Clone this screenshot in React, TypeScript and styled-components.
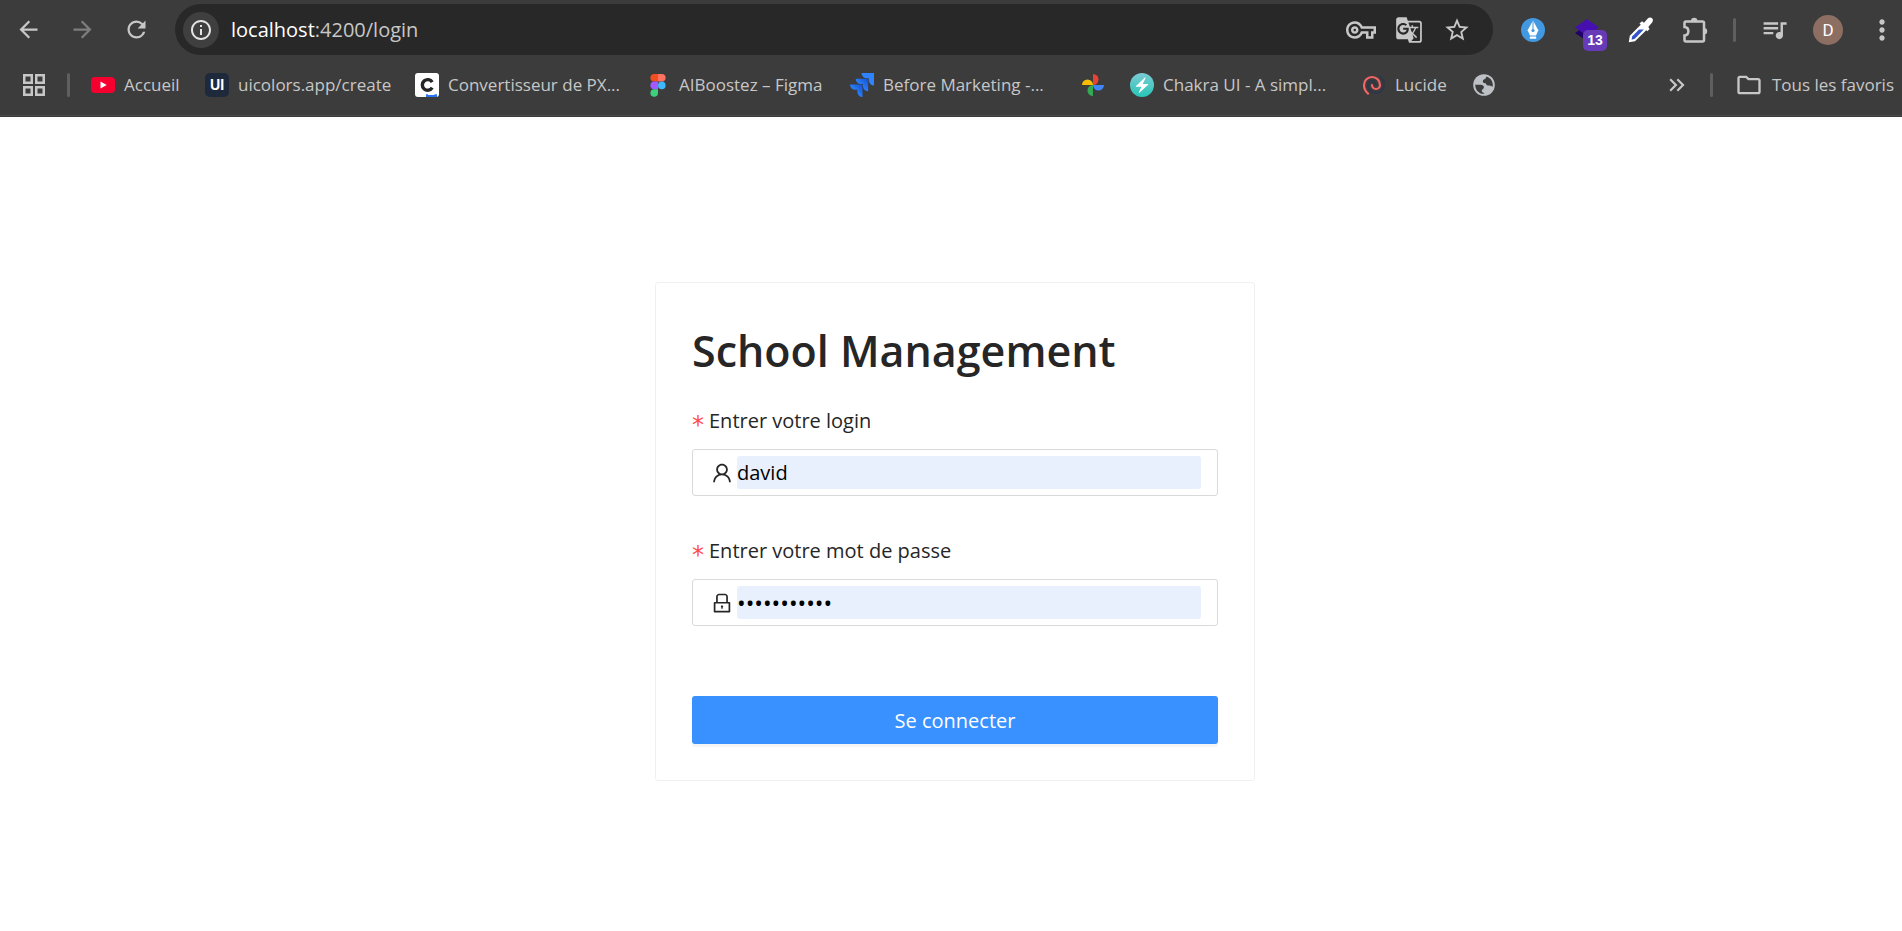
import React from 'react';
import styled, { createGlobalStyle } from 'styled-components';
import {
  MdArrowBack,
  MdArrowForward,
  MdRefresh,
  MdInfoOutline,
  MdGTranslate,
  MdOutlineVpnKey,
  MdStarBorder,
  MdQueueMusic,
  MdMoreVert,
  MdOutlineFolder,
  MdKeyboardDoubleArrowRight,
} from 'react-icons/md';
import { AiOutlineUser, AiOutlineLock } from 'react-icons/ai';

const GlobalStyle = createGlobalStyle`
  *, *::before, *::after { box-sizing: border-box; }
  body {
    margin: 0;
    background: #fff;
    font-family: "Segoe UI", "Open Sans", "Noto Sans", sans-serif;
  }
  svg { display: block; flex: none; }
`;

const Page = styled.div`
  min-height: 100vh;
  display: flex;
  flex-direction: column;
`;

const BrowserBar = styled.header`
  background: #3c3c3c;
  color: #c7c7c7;
  padding: 4px 0 1px;
`;

const Toolbar = styled.div`
  display: flex;
  align-items: center;
  height: 51px;
`;

const NavButtons = styled.nav`
  display: flex;
  gap: 8px;
  padding: 0 16px 0 5px;
`;

const IconButton = styled.button<{ $width?: number; $dim?: boolean }>`
  position: relative;
  display: flex;
  align-items: center;
  justify-content: center;
  flex: none;
  width: ${(p) => p.$width ?? 40}px;
  height: 40px;
  padding: 0;
  border: 0;
  background: none;
  color: ${(p) => (p.$dim ? '#7d7d7d' : '#c7c7c7')};
`;

const AddressBar = styled.div`
  display: flex;
  align-items: center;
  flex: 1;
  min-width: 0;
  height: 51px;
  padding: 0 16px 0 8px;
  border-radius: 26px;
  background: #282828;
`;

const SiteInfo = styled.button`
  display: flex;
  align-items: center;
  justify-content: center;
  flex: none;
  width: 36px;
  height: 36px;
  margin-right: 12px;
  padding: 0;
  border: 0;
  border-radius: 50%;
  background: #3f3f3f;
  color: #e3e3e3;
`;

const Url = styled.div`
  flex: 1;
  min-width: 0;
  overflow: hidden;
  white-space: nowrap;
  font-size: 20px;
  line-height: 28px;
  color: #c7c7c7;
`;

const Host = styled.span`
  color: #fff;
`;

const AddressActions = styled.div`
  display: flex;
  gap: 8px;
`;

const Extensions = styled.div`
  display: flex;
  align-items: center;
  gap: 14px;
  padding-left: 20px;
`;

const Divider = styled.span<{ $space?: number }>`
  flex: none;
  width: 3px;
  height: 24px;
  margin: 0 ${(p) => p.$space ?? 0}px;
  border-radius: 2px;
  background: #5f5f5f;
`;

const Badge = styled.span`
  position: absolute;
  right: 0;
  bottom: -1px;
  width: 24px;
  height: 21px;
  border-radius: 5px;
  background: #673ab7;
  color: #fff;
  font-size: 14px;
  font-weight: 700;
  line-height: 21px;
  text-align: center;
`;

const Avatar = styled.span`
  width: 30px;
  height: 30px;
  border-radius: 50%;
  background: #8d6e63;
  color: #fff;
  font-family: Roboto, sans-serif;
  font-size: 17px;
  line-height: 30px;
  text-align: center;
`;

const BookmarksBar = styled.div`
  display: flex;
  align-items: center;
  height: 61px;
  padding: 0 8px 0 22px;
  border-bottom: 1px solid #484848;
`;

const BookmarkList = styled.nav`
  display: flex;
  align-items: center;
  gap: 25px;
  flex: 1;
  min-width: 0;
  overflow: hidden;
`;

const Bookmark = styled.a`
  display: flex;
  align-items: center;
  flex: none;
  gap: 9px;
  color: #c7c7c7;
  text-decoration: none;
`;

const BookmarkLabel = styled.span<{ $width?: number }>`
  width: ${(p) => (p.$width ? `${p.$width}px` : 'auto')};
  font-size: 17px;
  line-height: 24px;
  white-space: nowrap;
`;

const BookmarkTools = styled.div`
  display: flex;
  align-items: center;
  gap: 10px;
`;

const FolderLink = styled(Bookmark)`
  padding-left: 12px;
`;

const Tile = styled.span<{ $bg: string; $color: string }>`
  width: 24px;
  height: 24px;
  border-radius: 5px;
  background: ${(p) => p.$bg};
  color: ${(p) => p.$color};
  font-family: Inter, sans-serif;
  font-size: 14px;
  font-weight: 700;
  line-height: 24px;
  text-align: center;
`;

const Main = styled.main`
  display: flex;
  flex: 1;
  align-items: flex-start;
  justify-content: center;
  padding: 165px 0 40px 8px;
`;

const Card = styled.form`
  width: 600px;
  max-width: 100%;
  padding: 36px;
  border: 1px solid #f0f0f0;
  border-radius: 3px;
`;

const Title = styled.h1`
  margin: 0 0 22px;
  color: #262626;
  font-size: 43px;
  font-weight: 600;
  line-height: 64px;
`;

const Field = styled.div`
  margin-bottom: 39px;
`;

const FieldLabel = styled.label`
  display: flex;
  gap: 5px;
  height: 32px;
  margin-bottom: 12px;
  color: #262626;
  font-size: 20px;
  line-height: 32px;
`;

const Required = styled.span`
  color: #ff4d4f;
  font-family: "DejaVu Sans", sans-serif;
  font-size: 24px;
  line-height: 40px;
`;

const InputBox = styled.div`
  display: flex;
  align-items: center;
  gap: 3px;
  height: 47px;
  padding: 0 16px 0 17px;
  border: 1px solid #d9d9d9;
  border-radius: 3px;
  color: #262626;
`;

const TextInput = styled.input`
  flex: 1;
  min-width: 0;
  height: 33px;
  padding: 0;
  border: 0;
  border-radius: 3px;
  outline: 0;
  background: #e8f0fe;
  color: #000;
  font-family: inherit;
  font-size: 20px;

  &[type='password'] {
    font-size: 23px;
  }
`;

const SubmitButton = styled.button`
  display: block;
  width: 100%;
  height: 48px;
  margin-top: 70px;
  padding: 0;
  border: 0;
  border-radius: 3px;
  background: #3891ff;
  box-shadow: 0 3px 0 rgba(0, 0, 0, 0.04);
  color: #fff;
  font-family: inherit;
  font-size: 20px;
`;

const AppsIcon = () => (
  <svg width="24" height="24" viewBox="0 0 24 24" fill="none" stroke="#c7c7c7" strokeWidth="2.5">
    <path d="M2.25 2.25h7.5v7.5h-7.5zM14.25 2.25h7.5v7.5h-7.5zM2.25 14.25h7.5v7.5h-7.5zM14.25 14.25h7.5v7.5h-7.5z" />
  </svg>
);

const YoutubeIcon = () => (
  <svg width="24" height="24" viewBox="0 0 24 24">
    <rect y="4" width="24" height="16" rx="4" fill="#f5002f" />
    <path d="M9.5 8.5v7l6.200-3.500z" fill="#fff" />
  </svg>
);

const ConverterIcon = () => (
  <svg width="24" height="24" viewBox="0 0 24 24">
    <rect width="24" height="24" rx="3" fill="#fff" />
    <path d="M17.200 9.200A5.300 5.300 0 1 0 17.200 14.600" fill="none" stroke="#262626" strokeWidth="3.400" />
    <path d="M11 21.300h2v.7h6.500v-.7H22V24H11z" fill="#2b74f5" />
  </svg>
);

const FigmaIcon = () => (
  <svg width="24" height="24" viewBox="0 0 24 24">
    <path d="M8.200 1H12v7.600H8.200a3.800 3.800 0 0 1 0-7.600z" fill="#f24e1e" />
    <path d="M12 1h3.800a3.800 3.800 0 0 1 0 7.600H12z" fill="#ff7262" />
    <path d="M8.200 8.600H12v7.600H8.200a3.800 3.800 0 0 1 0-7.600z" fill="#a259ff" />
    <circle cx="15.800" cy="12.400" r="3.800" fill="#3fb8ff" />
    <path d="M8.200 16.200H12V20a3.800 3.800 0 1 1-3.800-3.800z" fill="#3ecf7c" />
  </svg>
);

const JiraIcon = () => (
  <svg width="24" height="24" viewBox="0 0 24 24">
    <defs>
      <linearGradient id="jira" x1="1" y1="0" x2="0.300" y2="0.700">
        <stop offset="0.150" stopColor="#1558d6" />
        <stop offset="0.900" stopColor="#2f83ff" />
      </linearGradient>
    </defs>
    <path d="M11.500 0H24v12.500a5.200 5.200 0 0 1-5.200-5.200V5.200h-2.100A5.200 5.200 0 0 1 11.500 0z" fill="#2f83ff" />
    <path d="M5.700 5.800h12.500v12.500a5.200 5.200 0 0 1-5.200-5.200V11h-2.100a5.200 5.200 0 0 1-5.200-5.200z" fill="url(#jira)" />
    <path d="M0 11.500h12.500V24a5.200 5.200 0 0 1-5.200-5.200v-2.100H5.200A5.200 5.200 0 0 1 0 11.500z" fill="url(#jira)" />
  </svg>
);

const PhotosIcon = () => (
  <svg width="24" height="24" viewBox="0 0 24 24">
    <path d="M12 1a5.500 5.500 0 0 1 0 11z" fill="#ea4335" />
    <path d="M12 12H1a5.500 5.500 0 0 1 11 0z" fill="#fbbc04" />
    <path d="M12 12h11a5.500 5.500 0 0 1-11 0z" fill="#4285f4" />
    <path d="M12 23a5.500 5.500 0 0 1 0-11z" fill="#34a853" />
  </svg>
);

const ChakraIcon = () => (
  <svg width="24" height="24" viewBox="0 0 24 24">
    <defs>
      <linearGradient id="chakra" x1="0" y1="0" x2="0" y2="1">
        <stop stopColor="#7bcbd4" />
        <stop offset="1" stopColor="#29c6b7" />
      </linearGradient>
    </defs>
    <circle cx="12" cy="12" r="12" fill="url(#chakra)" />
    <path d="M14.900 4.600 6 12.900c-.4.400-.1.900.3.900h5.200l-2.700 5.400c-.2.500.2.900.6.500l8.700-7.900c.4-.4.100-.9-.3-.9h-5.100l2.800-5.700c.2-.5-.2-.9-.6-.6z" fill="#fff" />
  </svg>
);

const LucideLogo = () => (
  <svg width="24" height="24" viewBox="0 0 24 24" fill="none" strokeWidth="2.200" strokeLinecap="round">
    <path d="M14 12a4 4 0 0 0-8 0 8 8 0 1 0 16 0 11 11 0 0 0-4.100-8.600" stroke="#2d3748" />
    <path d="M10 12a4 4 0 0 0 8 0 8 8 0 1 0-16 0 11 11 0 0 0 4.100 8.600" stroke="#f56565" />
  </svg>
);

const GlobeIcon = () => (
  <svg width="24" height="24" viewBox="0 0 24 24">
    <circle cx="12" cy="12" r="10.800" fill="#bdc1c6" />
    <path
      d="M14.500 3.500c3.500 1 6.300 4.200 6.300 8.500 0 .8 0 1.200-.2 1.800-1.200-.8-2.800-1.300-4.300-1.300-1.800 0-2.300-1-2.300-2.200-1.800 0-3.200-.3-3.200-2 0-1.200 1-1.700 2-2.200 1.200-.6 1.200-1.600 1.700-2.600z"
      fill="#3c3c3c"
    />
    <path
      d="M3.200 11.500c1.500.3 3 .3 5.500.3 2 0 3.200 1 3.200 2.500 0 1-.5 1.500-1.200 1.900-.8.500-1 1.300-1 2.300l3 2.200c-5 .8-9.500-3-9.500-9.200z"
      fill="#3c3c3c"
    />
  </svg>
);

const PenIcon = () => (
  <svg width="24" height="24" viewBox="0 0 24 24">
    <circle cx="12" cy="12" r="12" fill="#4299e1" />
    <path d="M12 2.500 6.700 12.300 9 17.500h6l2.300-5.200z" fill="#fff" />
    <rect x="8.800" y="18.400" width="6.400" height="2.400" rx=".6" fill="#fff" />
    <path d="M12 3v9" stroke="#4299e1" strokeWidth="1" />
    <circle cx="12" cy="12.500" r="1.600" fill="#4299e1" />
  </svg>
);

const LayersIcon = () => (
  <svg width="26" height="24" viewBox="0 0 26 24">
    <path d="M1 15 13 7l12 8-12 8z" fill="#1f0066" />
    <path d="M1 9.500 13 1l12 8.500L13 18z" fill="#4610b0" />
  </svg>
);

const DropperIcon = () => (
  <svg width="26" height="26" viewBox="0 0 26 26">
    <path d="M14 6.500 1.800 18.800.8 25.200l6.200-1L19.500 12z" fill="#fff" />
    <path d="M11 12.500h4.800L6.800 21.800l-3.200.9.500-3.200z" fill="#3154c8" />
    <path d="m11.500 6.500 2.500-2.300 2 1.500L20 1.300c1.200-1.200 3-1.200 4.100 0s1.200 2.900 0 4.100L20.300 10l1.300 2-2.300 2.300z" fill="#fff" />
  </svg>
);

const PuzzleIcon = () => (
  <svg width="26" height="26" viewBox="0 0 26 26">
    <path
      d="M4 4.500h16.500a1.500 1.500 0 0 1 1.500 1.500v17a1.500 1.500 0 0 1-1.500 1.500H4A1.500 1.500 0 0 1 2.500 23v-4.500c5.200-.5 5.200-8 0-8.500V6A1.500 1.500 0 0 1 4 4.500z"
      fill="none"
      stroke="#c7c7c7"
      strokeWidth="2.500"
    />
    <path d="M9 4a3.200 3.200 0 0 1 6.400 0zM22 11a3.200 3.200 0 0 1 0 6.400z" fill="#c7c7c7" />
  </svg>
);

interface BookmarkItem {
  icon: React.ReactNode;
  label?: string;
  width?: number;
  name?: string;
}

const bookmarks: BookmarkItem[] = [
  { icon: <YoutubeIcon />, label: 'Accueil', width: 56 },
  { icon: <Tile $bg="#1e293b" $color="#fff">UI</Tile>, label: 'uicolors.app/create', width: 152 },
  { icon: <ConverterIcon />, label: 'Convertisseur de PX...', width: 173 },
  { icon: <FigmaIcon />, label: 'AIBoostez – Figma', width: 146 },
  { icon: <JiraIcon />, label: 'Before Marketing -...', width: 173 },
  { icon: <PhotosIcon />, name: 'Photos' },
  { icon: <ChakraIcon />, label: 'Chakra UI - A simpl...', width: 174 },
  { icon: <LucideLogo />, label: 'Lucide', width: 52 },
  { icon: <GlobeIcon />, name: 'Site' },
];

export default function App() {
  return (
    <Page>
      <GlobalStyle />
      <BrowserBar>
        <Toolbar>
          <NavButtons>
            <IconButton $width={46} aria-label="Retour"><MdArrowBack size={27} /></IconButton>
            <IconButton $width={46} $dim aria-label="Avancer"><MdArrowForward size={27} /></IconButton>
            <IconButton $width={46} aria-label="Actualiser"><MdRefresh size={27} /></IconButton>
          </NavButtons>
          <AddressBar>
            <SiteInfo aria-label="Informations"><MdInfoOutline size={24} /></SiteInfo>
            <Url><Host>localhost</Host>:4200/login</Url>
            <AddressActions>
              <IconButton aria-label="Mots de passe"><MdOutlineVpnKey size={30} /></IconButton>
              <IconButton aria-label="Traduire"><MdGTranslate size={28} /></IconButton>
              <IconButton aria-label="Favori"><MdStarBorder size={28} /></IconButton>
            </AddressActions>
          </AddressBar>
          <Extensions>
            <IconButton aria-label="Stylo"><PenIcon /></IconButton>
            <IconButton aria-label="Calques"><LayersIcon /><Badge>13</Badge></IconButton>
            <IconButton aria-label="Pipette"><DropperIcon /></IconButton>
            <IconButton aria-label="Extensions"><PuzzleIcon /></IconButton>
            <Divider $space={4} />
            <IconButton aria-label="Médias"><MdQueueMusic size={29} /></IconButton>
            <IconButton aria-label="Profil"><Avatar>D</Avatar></IconButton>
            <IconButton aria-label="Menu"><MdMoreVert size={32} /></IconButton>
          </Extensions>
        </Toolbar>
        <BookmarksBar>
          <Bookmark href="#" aria-label="Applications"><AppsIcon /></Bookmark>
          <Divider $space={21} />
          <BookmarkList>
            {bookmarks.map((b) => (
              <Bookmark key={b.label ?? b.name} href="#" aria-label={b.label ?? b.name}>
                {b.icon}
                {b.label && <BookmarkLabel $width={b.width}>{b.label}</BookmarkLabel>}
              </Bookmark>
            ))}
          </BookmarkList>
          <BookmarkTools>
            <IconButton $width={46} aria-label="Plus de favoris"><MdKeyboardDoubleArrowRight size={26} /></IconButton>
            <Divider />
            <FolderLink href="#">
              <MdOutlineFolder size={28} />
              <BookmarkLabel>Tous les favoris</BookmarkLabel>
            </FolderLink>
          </BookmarkTools>
        </BookmarksBar>
      </BrowserBar>
      <Main>
        <Card onSubmit={(e) => e.preventDefault()}>
          <Title>School Management</Title>
          <Field>
            <FieldLabel htmlFor="login"><Required>*</Required>Entrer votre login</FieldLabel>
            <InputBox>
              <AiOutlineUser size={24} />
              <TextInput id="login" type="text" defaultValue="david" />
            </InputBox>
          </Field>
          <Field>
            <FieldLabel htmlFor="password"><Required>*</Required>Entrer votre mot de passe</FieldLabel>
            <InputBox>
              <AiOutlineLock size={24} />
              <TextInput id="password" type="password" defaultValue="motdepasse1" />
            </InputBox>
          </Field>
          <SubmitButton type="submit">Se connecter</SubmitButton>
        </Card>
      </Main>
    </Page>
  );
}
